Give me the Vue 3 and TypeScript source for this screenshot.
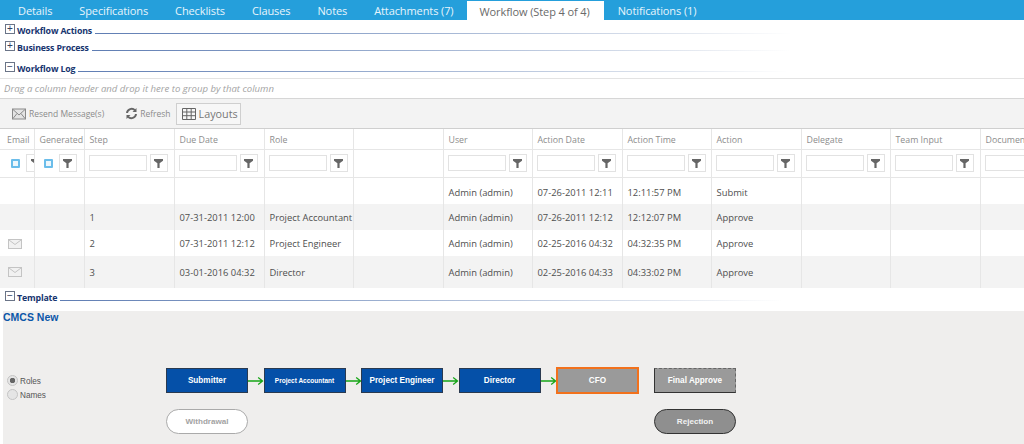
<script setup lang="ts">
const tabs = ['Details', 'Specifications', 'Checklists', 'Clauses', 'Notes', 'Attachments (7)', 'Workflow (Step 4 of 4)', 'Notifications (1)']
const activeTab = 'Workflow (Step 4 of 4)'
const columns = ['Email', 'Generated', 'Step', 'Due Date', 'Role', '', 'User', 'Action Date', 'Action Time', 'Action', 'Delegate', 'Team Input', 'Document']
const widths = [34, 50, 90, 90, 89, 90, 89, 90, 89, 90, 89, 90, 90]
const rows = [
  { mail: false, cells: ['', '', '', '', 'Admin (admin)', '07-26-2011 12:11', '12:11:57 PM', 'Submit'] },
  { mail: false, cells: ['1', '07-31-2011 12:00', 'Project Accountant', '', 'Admin (admin)', '07-26-2011 12:12', '12:12:07 PM', 'Approve'] },
  { mail: true, cells: ['2', '07-31-2011 12:12', 'Project Engineer', '', 'Admin (admin)', '02-25-2016 04:32', '04:32:35 PM', 'Approve'] },
  { mail: true, cells: ['3', '03-01-2016 04:32', 'Director', '', 'Admin (admin)', '02-25-2016 04:33', '04:33:02 PM', 'Approve'] },
]
const flow = [
  { label: 'Submitter', kind: 'done', arrow: true },
  { label: 'Project Accountant', kind: 'done small', arrow: true },
  { label: 'Project Engineer', kind: 'done', arrow: true },
  { label: 'Director', kind: 'done', arrow: true },
  { label: 'CFO', kind: 'current', arrow: false },
  { label: 'Final Approve', kind: 'pending', arrow: false },
]
function cellsFor(cells: string[]): string[] {
  return [...cells, '', '', '', '']
}
</script>

<template>
  <div class="page">
    <nav class="tabs">
      <span v-for="t in tabs" :key="t" class="tab" :class="{ active: t === activeTab }">{{ t }}</span>
    </nav>

    <div class="section s1">
      <span class="box">+</span><b>Workflow Actions</b><i class="rule"></i>
    </div>
    <div class="section s2">
      <span class="box">+</span><b>Business Process</b><i class="rule"></i>
    </div>
    <div class="section s3">
      <span class="box">−</span><b>Workflow Log</b><i class="rule"></i>
    </div>

    <div class="group">Drag a column header and drop it here to group by that column</div>

    <div class="toolbar">
      <span class="tool resend">
        <svg width="15" height="12" viewBox="0 0 15 12"><rect x="0.5" y="1" width="13" height="10" fill="#e4e4e4" stroke="#8a8a8a"/><path d="M1 1.5 7 7l6-5.500M1 10.500 5 5.500M13 10.500 9 5.500" fill="none" stroke="#8a8a8a"/></svg>
        Resend Message(s)
      </span>
      <span class="tool refresh">
        <svg width="13" height="13" viewBox="0 0 13 13"><path d="M2 6a4.600 4.600 0 0 1 8-2.600" fill="none" stroke="#666" stroke-width="2"/><path d="M11.500 1v4h-4z" fill="#666"/><path d="M11 7a4.600 4.600 0 0 1-8 2.600" fill="none" stroke="#666" stroke-width="2"/><path d="M1.500 12V8h4z" fill="#666"/></svg>
        Refresh
      </span>
      <span class="layouts">
        <svg width="14" height="12" viewBox="0 0 14 12"><path d="M.5.500h13v11H.5zM.5 4h13M.5 7.700h13M4.800.500v11M9.200.500v11" fill="none" stroke="#666"/></svg>
        Layouts
      </span>
    </div>

    <div class="grid-wrap">
      <table class="grid">
        <colgroup><col v-for="(w, i) in widths" :key="i" :width="w" /></colgroup>
        <thead>
          <tr class="head">
            <th v-for="c in columns" :key="c">{{ c }}</th>
          </tr>
          <tr class="filters">
            <td v-for="(c, i) in columns" :key="c">
              <div v-if="c" class="filter" :class="{ check: i < 2, first: i === 0 }">
                <span v-if="i < 2" class="checkbox"></span>
                <span v-else class="input"></span>
                <span class="fbtn">
                  <svg width="9" height="9" viewBox="0 0 9 9"><path d="M0 0h9v1.800L5.600 4.300V9H3.400V4.300L0 1.800z" fill="#666"/></svg>
                </span>
              </div>
            </td>
          </tr>
        </thead>
        <tbody>
          <tr v-for="(r, n) in rows" :key="n" class="row" :class="'r' + n">
            <td class="mail">
              <svg v-if="r.mail" width="14" height="10" viewBox="0 0 14 10"><rect x="0.500" y="0.500" width="13" height="9" fill="#f1f1f1" stroke="#c4c4c4"/><path d="M1 1l6 4.500L13 1" fill="none" stroke="#c4c4c4"/></svg>
            </td>
            <td></td>
            <td v-for="(c, j) in cellsFor(r.cells)" :key="j">{{ c }}</td>
          </tr>
        </tbody>
      </table>
    </div>

    <div class="section s4">
      <span class="box">−</span><b>Template</b><i class="rule"></i>
    </div>

    <section class="template">
      <h2>CMCS New</h2>
      <div class="canvas">
        <div class="radios">
          <label><span class="radio on"></span>Roles</label>
          <label><span class="radio"></span>Names</label>
        </div>
        <div class="diagram">
          <div class="flow">
            <template v-for="f in flow" :key="f.label">
              <div class="node" :class="f.kind">{{ f.label }}</div>
              <svg v-if="f.arrow" class="arrow" width="16" height="8" viewBox="0 0 16 8"><path d="M0 4h15M10.500 .500 15 4l-4.500 3.500" fill="none" stroke="#16a516" stroke-width="1.300"/></svg>
              <span v-else class="spacer"></span>
            </template>
          </div>
          <div class="exits">
            <div class="pill white">Withdrawal</div>
            <div class="pill grey">Rejection</div>
          </div>
        </div>
      </div>
    </section>
  </div>
</template>

<style>
html, body { margin: 0; background: #fff; overflow: hidden; }
</style>

<style scoped>
.page { width: 1024px; height: 444px; overflow: hidden; font-family: "Open Sans", "Noto Sans", sans-serif; background: #fff; display: flex; flex-direction: column; }
.tabs { height: 20px; flex: none; background: #259fdb; display: flex; padding-left: 5px; box-sizing: border-box; }
.tab { color: #e8f5fc; font-size: 11px; line-height: 22px; padding: 0 13px; margin-right: 1px; white-space: nowrap; letter-spacing: -0.100px; }
.tab.active { background: #fff; color: #6a6a6a; margin-top: 1px; line-height: 21px; margin-left: -1px; padding-right: 14px; }

.section { display: flex; align-items: flex-end; flex: none; height: 14px; padding-left: 5px; color: #17356f; }
.section b { font-size: 8.800px; line-height: 12px; white-space: nowrap; margin-right: 3px; letter-spacing: -0.150px; }
.box { width: 8px; height: 8px; border: 1px solid #6a7487; color: #33415f; font: 400 10px/8px "Liberation Sans", sans-serif; text-align: center; margin: 0 2px 3px 0; flex: none; }
.rule { flex: 1; height: 1px; margin-bottom: 3px; background: linear-gradient(90deg, #5f7db3 0%, #9fb2d2 35%, #e6eaf1 65%, #fff 75%); }
.s1 { margin-top: 3px; }
.s2 { margin-top: 3px; }
.s3 { margin-top: 7px; }
.s4 { margin-top: 2px; height: 14px; }

.group { flex: none; margin-top: 3px; height: 19px; box-sizing: content-box; border-top: 1px solid #e3e3e3; font-size: 9.550px; font-style: italic; line-height: 19px; color: #a3a3a3; padding-left: 4px; }
.toolbar { flex: none; height: 31px; box-sizing: border-box; background: #f3f3f3; border-top: 1px solid #d6d6d6; border-bottom: 1px solid #cfcfcf; display: flex; align-items: center; color: #8b8b8b; font-size: 8.500px; padding-left: 12px; }
.tool { display: flex; align-items: center; gap: 2px; white-space: nowrap; }
.refresh { margin-left: 21px; }
.layouts { display: flex; align-items: center; gap: 3px; margin-left: 5px; height: 22px; width: 65px; box-sizing: border-box; padding-left: 5px; border: 1px solid #cfcfcf; background: #f7f7f7; color: #777; font-size: 10.800px; }

.grid-wrap { flex: none; height: 159px; overflow: hidden; }
.grid { table-layout: fixed; border-collapse: collapse; width: 1170px; font-size: 9.400px; color: #4f4f4f; }
.grid td, .grid th { border-left: 1px solid #e6e6e6; padding: 0; white-space: nowrap; overflow: hidden; text-align: left; font-weight: 400; }
.grid td:first-child, .grid th:first-child { border-left: 0; }
.head th { height: 20px; color: #8d8d8d; padding: 2px 0 0 5px; border-bottom: 1px solid #e6e6e6; box-sizing: border-box; font-size: 8.800px; }
.head th:first-child { padding-left: 7px; }
.filters td { height: 28px; border-bottom: 1px solid #e6e6e6; box-sizing: border-box; }
.filter { display: flex; align-items: center; gap: 3px; padding-left: 4px; }
.filter.check { gap: 6px; padding-left: 9px; }
.filter.first { padding-left: 11px; }
.input { width: 56px; height: 14px; border: 1px solid #e2e2e2; background: #fff; flex: none; }
.checkbox { width: 5px; height: 5px; border: 2px solid #6bbdea; border-radius: 1px; background: #eef7fc; flex: none; }
.fbtn { width: 16px; height: 16px; border: 1px solid #e2e2e2; display: flex; align-items: center; justify-content: center; flex: none; background: #fff; }
.row td { padding-left: 5px; box-sizing: border-box; }
.r0 td { height: 27px; padding-top: 3px; }
.r1 td { height: 26px; padding-top: 1px; background: #f3f3f3; }
.r2 td { height: 26px; padding-top: 1px; }
.r3 td { height: 32px; background: #f3f3f3; }
.row .mail { padding-left: 8px; }
.mail svg { display: block; }

.template { flex: 1; margin: 7px 0 0 3px; background: #efeeed; min-height: 0; display: flex; flex-direction: column; font-family: "Liberation Sans", Arial, sans-serif; }
.template h2 { margin: 0; font-size: 10.500px; line-height: 13px; color: #0b56a8; font-weight: 700; }
.canvas { display: flex; align-items: flex-start; margin-top: 43px; padding-left: 4px; }
.radios { width: 159px; flex: none; display: flex; flex-direction: column; gap: 3px; margin-top: 9px; font-size: 8.200px; color: #555; }
.radios label { display: flex; align-items: center; gap: 2px; height: 11px; }
.radio { width: 9px; height: 9px; border-radius: 50%; background: #e5e5e5; border: 1px solid #c4c4c4; box-sizing: content-box; margin: -3px 0 0 0; }
.radio.on { background: radial-gradient(circle, #666 0 2.500px, #e5e5e5 3px); }
.flow { display: flex; align-items: center; height: 27px; }
.node { width: 82px; height: 25px; box-sizing: border-box; display: flex; align-items: center; justify-content: center; color: #fff; font-weight: 700; font-size: 8.200px; white-space: nowrap; border: 1px solid #2a3a50; flex: none; }
.node.done { background: #0550a8; }
.node.small { font-size: 6.500px; }
.node.current { background: #9a9a9a; height: 27px; width: 83px; border: 2px solid #f2711c; }
.node.pending { background: #9a9a9a; border: 1px solid #333; border-top: 1px dashed #666; border-right: 1px dashed #666; }
.arrow { width: 15.500px; flex: none; }
.spacer { width: 15px; flex: none; }
.exits { display: flex; justify-content: space-between; width: 570px; margin-top: 15px; }
.pill { width: 82px; height: 25px; box-sizing: border-box; border-radius: 13px; display: flex; align-items: center; justify-content: center; font-size: 8.100px; font-weight: 700; }
.pill.white { background: #fff; border: 1px solid #aaa; color: #a3a3a3; }
.pill.grey { background: #8f8f8f; border: 1px solid #333; color: #f2f2f2; }
</style>
